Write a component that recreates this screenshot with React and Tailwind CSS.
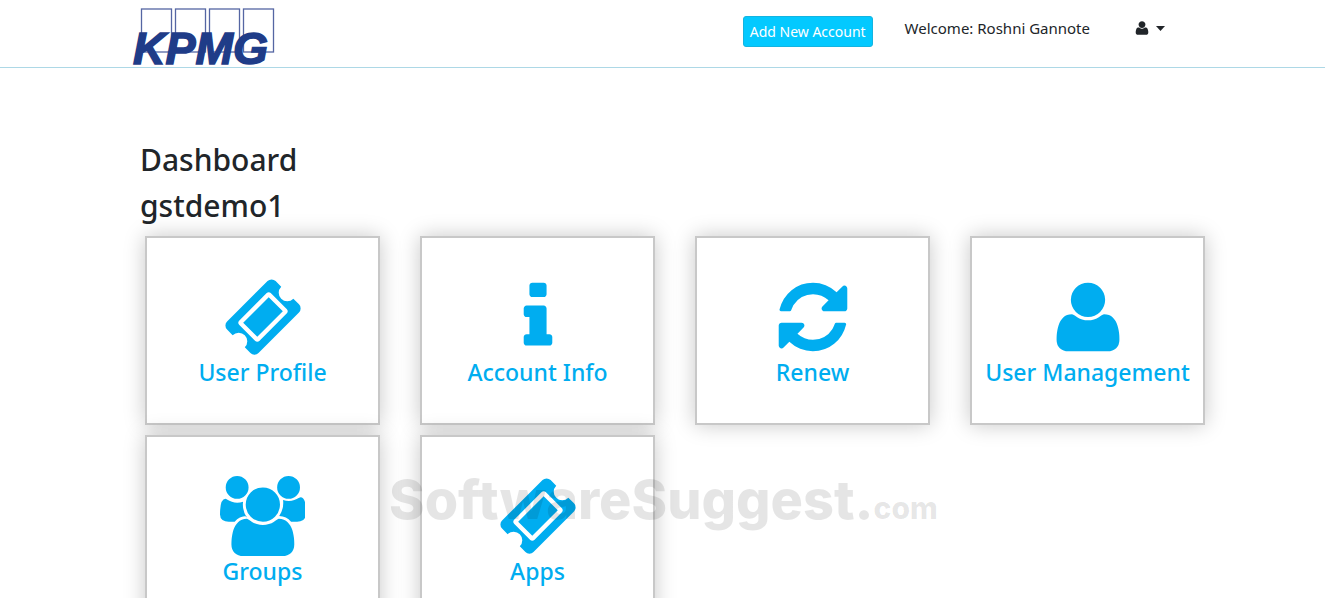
// src/App.jsx
import React from 'react';

// Font Awesome 4 outlines
const icons = {
  ticket: {
    viewBox: '0 0 1792 1792',
    path: 'M1024 452l316 316-572 572-316-316zm-211 979l618-618q19-19 19-45t-19-45l-362-362q-18-18-45-18t-45 18l-618 618q-19 19-19 45t19 45l362 362q18 18 45 18t45-18zm889-637l-907 908q-37 37-90.5 37t-90.5-37l-126-126q56-56 56-136t-56-136-136-56-136 56l-125-126q-37-37-37-90.5t37-90.5l907-906q37-37 90.5-37t90.5 37l125 125q-56 56-56 136t56 136 136 56 136-56l126 125q37 37 37 90.5t-37 90.5z',
  },
  info: {
    viewBox: '0 0 1792 1792',
    path: 'M1216 1344v128q0 26-19 45t-45 19h-512q-26 0-45-19t-19-45v-128q0-26 19-45t45-19h64v-384h-64q-26 0-45-19t-19-45v-128q0-26 19-45t45-19h384q26 0 45 19t19 45v576h64q26 0 45 19t19 45zm-128-1152v192q0 26-19 45t-45 19h-256q-26 0-45-19t-19-45v-192q0-26 19-45t45-19h256q26 0 45 19t19 45z',
  },
  refresh: {
    viewBox: '0 0 1792 1792',
    path: 'M1639 1056q0 5-1 7-64 268-268 434.5t-478 166.5q-146 0-282.5-55t-243.5-157l-129 129q-19 19-45 19t-45-19-19-45v-448q0-26 19-45t45-19h448q26 0 45 19t19 45-19 45l-137 137q71 66 161 102t187 36q134 0 250-65t186-179q11-17 53-117 8-23 30-23h192q13 0 22.5 9.5t9.5 22.5zm25-800v448q0 26-19 45t-45 19h-448q-26 0-45-19t-19-45 19-45l138-138q-148-137-349-137-134 0-250 65t-186 179q-11 17-53 117-8 23-30 23h-199q-13 0-22.5-9.5t-9.5-22.5v-7q65-268 270-434.5t480-166.5q146 0 284 55.5t245 156.5l130-129q19-19 45-19t45 19 19 45z',
  },
  user: {
    viewBox: '0 0 1792 1792',
    path: 'M1600 1405q0 120-73 189.5t-194 69.5h-874q-121 0-194-69.5t-73-189.5q0-53 3.5-103.5t14-109 26.5-108.5 43-97.5 62-81 85.5-53.5 111.5-20q9 0 42 21.5t74.5 48 108 48 133.5 21.5 133.5-21.5 108-48 74.5-48 42-21.5q61 0 111.5 20t85.5 53.5 62 81 43 97.5 26.5 108.5 14 109 3.5 103.5zm-320-893q0 159-112.5 271.5t-271.5 112.5-271.5-112.5-112.5-271.5 112.5-271.5 271.5-112.5 271.5 112.5 112.5 271.5z',
  },
  users: {
    viewBox: '0 0 1920 1792',
    path: 'M593 896q-162 5-265 128h-134q-82 0-138-40.5t-56-118.5q0-353 124-353 6 0 43.5 21t97.5 42.5 119 21.5q67 0 133-23-5 37-5 66 0 159 90 294zm1071 637q0 120-73 189.5t-194 69.5h-874q-121 0-194-69.5t-73-189.5q0-53 3.5-103.5t14-109 26.5-108.5 43-97.5 62-81 85.5-53.5 111.5-20q10 0 43 21.5t73 48 107 48 135 21.5 135-21.5 107-48 73-48 43-21.5q61 0 111.5 20t85.5 53.5 62 81 43 97.5 26.5 108.5 14 109 3.5 103.5zm-1024-1277q0 106-75 181t-181 75-181-75-75-181 75-181 181-75 181 75 75 181zm704 384q0 159-112.5 271.5t-271.5 112.5-271.5-112.5-112.5-271.5 112.5-271.5 271.5-112.5 271.5 112.5 112.5 271.5zm576 225q0 78-56 118.5t-138 40.5h-134q-103-123-265-128 90-135 90-294 0-29-5-66 66 23 133 23 59 0 119-21.5t97.5-42.5 43.5-21q124 0 124 353zm-128-609q0 106-75 181t-181 75-181-75-75-181 75-181 181-75 181 75 75 181z',
  },
};

const tiles = [
  { label: 'User Profile', icon: 'ticket' },
  { label: 'Account Info', icon: 'info' },
  { label: 'Renew', icon: 'refresh' },
  { label: 'User Management', icon: 'user' },
  { label: 'Groups', icon: 'users' },
  { label: 'Apps', icon: 'ticket' },
];

const Icon = ({ name, className }) => (
  <svg className={className} viewBox={icons[name].viewBox} fill="currentColor" aria-hidden="true">
    <path d={icons[name].path} />
  </svg>
);

const Logo = () => (
  <svg className="w-[144px] h-[60px] overflow-visible" viewBox="0 0 144 60" role="img" aria-label="KPMG">
    <g fill="#fff" stroke="#5566a3" strokeWidth="1.3">
      <rect x="9.5" y="2" width="30" height="43" />
      <rect x="43.5" y="2" width="30" height="43" />
      <rect x="77.5" y="2" width="30" height="43" />
      <rect x="111.5" y="2" width="30" height="43" />
    </g>
    <text
      x="1"
      y="57"
      className="font-['Liberation_Sans',sans-serif] font-bold italic text-[45px]"
      fill="#1f3c88"
      stroke="#1f3c88"
      strokeWidth="1.5"
    >
      KPMG
    </text>
  </svg>
);

const Tile = ({ label, icon }) => (
  <a
    href="#"
    className="flex flex-col items-center h-[189px] pt-[39px] bg-white border-2 border-[#c8c8c8] text-[#00adf0] shadow-[0_0_20px_rgba(0,0,0,0.22)]"
  >
    <Icon name={icon} className="h-20 w-auto" />
    <span className="text-[23px] leading-[30px] font-medium whitespace-nowrap">{label}</span>
  </a>
);

const App = () => {
  return (
    <div className="relative h-screen overflow-hidden bg-white text-[#212529] font-['Noto_Sans',sans-serif]">
      {/* Top bar */}
      <header className="flex items-start justify-between h-[68px] pl-[132px] pr-[160px] border-b border-[#add8e6]">
        <a href="#" className="pt-[7px]">
          <Logo />
        </a>
        <div className="flex items-start pt-4">
          <button
            type="button"
            className="h-[31px] px-1.5 bg-[#03c9ff] border border-[#14b4e0] rounded-[3px] text-white text-sm whitespace-nowrap"
          >
            Add New Account
          </button>
          <span className="ml-8 text-[15px] leading-6 whitespace-nowrap">Welcome: Roshni Gannote</span>
          <button type="button" aria-label="Account menu" className="flex items-center h-6 ml-11 gap-1.5">
            <Icon name="user" className="size-4" />
            <svg className="w-[9px] h-[5px]" viewBox="0 0 9 5" fill="currentColor" aria-hidden="true">
              <path d="M0 0h9L4.5 5z" />
            </svg>
          </button>
        </div>
      </header>

      <main className="pt-[73px] pl-[140px] pr-[120px]">
        <h1 className="text-[30px] leading-[38px] font-medium mb-2">Dashboard</h1>
        <h2 className="text-[30px] leading-[38px] font-medium mb-[11px]">gstdemo1</h2>
        <div className="grid grid-cols-4 gap-x-10 gap-y-[10px] pl-[5px]">
          {tiles.map((tile) => (
            <Tile key={tile.label} label={tile.label} icon={tile.icon} />
          ))}
        </div>
      </main>

      {/* Watermark */}
      <div className="absolute left-[389px] top-[464px] pointer-events-none whitespace-nowrap leading-[72px] font-['Inter',sans-serif] font-extrabold text-black/10">
        <span className="text-[54px]">SoftwareSuggest.</span>
        <span className="text-[30px]">com</span>
      </div>
    </div>
  );
};

export default App;
